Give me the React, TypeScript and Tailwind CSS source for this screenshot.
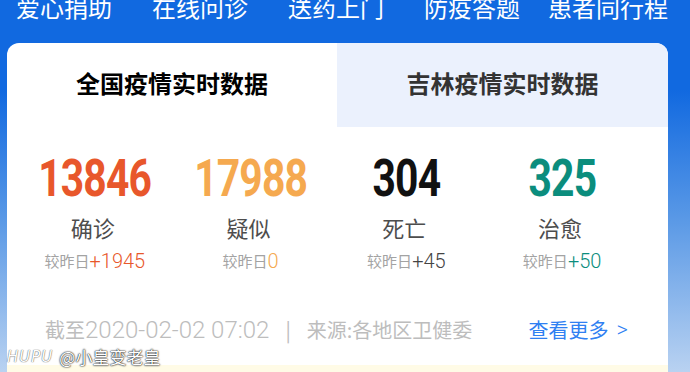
import React from "react";

const cjk = "font-['Noto_Sans_CJK_SC','Noto_Sans',sans-serif]";
const roboto = "font-['Roboto','Noto_Sans_CJK_SC',sans-serif]";

const stats = [
  { n: "13846", label: "确诊", delta: "+1945", nc: "text-[#e8572b]", dc: "text-[#e8572b]" },
  { n: "17988", label: "疑似", delta: "0", nc: "text-[#f5a94f]", dc: "text-[#f5a94f]" },
  { n: "304", label: "死亡", delta: "+45", nc: "text-[#111111]", dc: "text-[#444444]" },
  { n: "325", label: "治愈", delta: "+50", nc: "text-[#0b8d7d]", dc: "text-[#0b8d7d]" },
];

export default function App() {
  return (
    <div
      className={`relative w-[690px] h-[372px] overflow-hidden bg-[linear-gradient(180deg,#1169e0_0px,#1169e0_90px,#5a99e6_220px,#b9d2f1_372px)] ${cjk}`}
    >
      <div className="h-[43px] overflow-hidden">
        <div className="grid grid-cols-5 w-[680px] -ml-[4px] -mt-[5px] text-[24px] leading-[24px] text-white">
          {["爱心捐助", "在线问诊", "送药上门", "防疫答题", "患者同行程"].map((t) => (
            <div key={t} className="text-center whitespace-nowrap">
              {t}
            </div>
          ))}
        </div>
      </div>

      <div className="ml-[7px] w-[661px] bg-white rounded-t-[12px] overflow-hidden">
        <div className="flex h-[84px]">
          <div className="w-[330px] flex items-center justify-center pb-[5px] text-[24px] font-bold text-black">
            全国疫情实时数据
          </div>
          <div className="flex-1 flex items-center justify-center pb-[5px] bg-[#ebf1fd] text-[24px] font-bold text-[#333333]">
            吉林疫情实时数据
          </div>
        </div>

        <div className="grid grid-cols-4 w-[623px] ml-[10px] pt-[27px]">
          {stats.map((s) => (
            <div key={s.n} className="flex flex-col items-center">
              <div
                className={`text-[51px] leading-[50px] font-bold tracking-[-1px] scale-x-[0.8] ${roboto} ${s.nc}`}
              >
                {s.n}
              </div>
              <div className="mt-[8px] text-[22px] leading-[30px] text-[#4d4d4d] -ml-[4px]">{s.label}</div>
              <div className="mt-[9px] h-[20px] flex items-center whitespace-nowrap">
                <span className="text-[15px] leading-[20px] text-[#a3a3a3]">较昨日</span>
                <span className={`text-[20px] leading-[20px] font-light ${roboto} ${s.dc}`}>{s.delta}</span>
              </div>
            </div>
          ))}
        </div>

        <div className="flex items-center justify-between pl-[38px] pr-[40px] mt-[45px] h-[28px] text-[20px] leading-[28px]">
          <div className="flex items-center text-[#bdbdbd] whitespace-nowrap">
            <span>截至</span>
            <span className={`text-[24px] font-light ${roboto}`}>2020-02-02 07:02</span>
            <span className="mx-[16px]">|</span>
            <span>来源:各地区卫健委</span>
          </div>
          <div className="flex items-center gap-[8px] text-[#2f80f2] whitespace-nowrap">
            <span>查看更多</span>
            <span className={`text-[22px] font-light ${roboto}`}>&gt;</span>
          </div>
        </div>

        <div className="mt-[21px] h-[10px] bg-[#fffbe6]" />
      </div>

      <div className="absolute left-[7px] top-[347px] flex items-center gap-[6px] text-white">
        <span className="italic text-[15px] leading-[18px] tracking-[1px] font-['DejaVu_Sans',sans-serif] font-light [text-shadow:0_0_1px_#666,0_0_1px_#666]">
          HUPU
        </span>
        <span className="text-[17px] leading-[20px] [text-shadow:0_0_2px_#000,0_0_1px_#000]">@小皇变老皇</span>
      </div>
    </div>
  );
}
